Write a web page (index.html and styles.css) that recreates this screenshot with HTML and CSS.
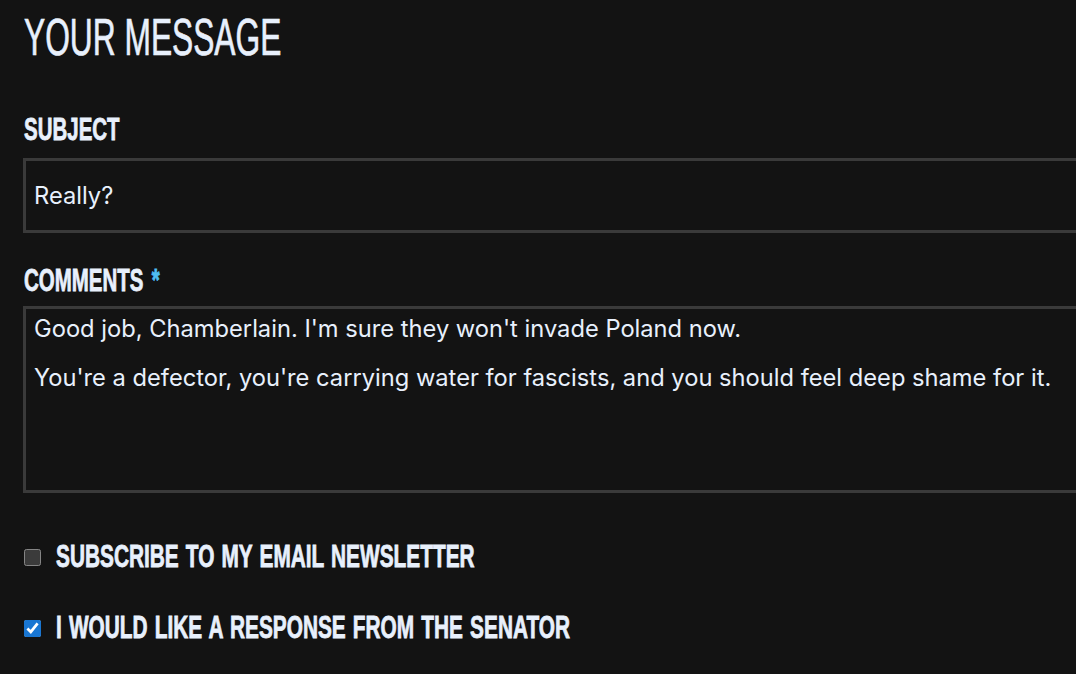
FILE: index.html
```html
<!DOCTYPE html>
<html lang="en">
<head>
<meta charset="utf-8">
<title>Contact</title>
<link rel="stylesheet" href="styles.css">
</head>
<body>
<form class="message-form">
  <h2 class="section-title"><span class="squeeze">YOUR MESSAGE</span></h2>

  <div class="field">
    <label class="field-label" for="subject"><span class="squeeze">SUBJECT</span></label>
    <input class="text-input" id="subject" type="text" value="Really?">
  </div>

  <div class="field field-comments">
    <label class="field-label" for="comments"><span class="squeeze">COMMENTS<span class="required">*</span></span></label>
    <textarea class="text-area" id="comments" rows="6">Good job, Chamberlain. I'm sure they won't invade Poland now.

You're a defector, you're carrying water for fascists, and you should feel deep shame for it.</textarea>
  </div>

  <label class="check-row">
    <input class="check" type="checkbox">
    <span class="check-label"><span class="squeeze">SUBSCRIBE TO MY EMAIL NEWSLETTER</span></span>
  </label>

  <label class="check-row">
    <input class="check" type="checkbox" checked>
    <span class="check-label"><span class="squeeze">I WOULD LIKE A RESPONSE FROM THE SENATOR</span></span>
  </label>
</form>
</body>
</html>
```

FILE: styles.css
```css
html, body {
  margin: 0;
  padding: 0;
  background: #131313;
  color: #e8f0fc;
  overflow: hidden;
}

body {
  font-family: Inter, "Noto Sans", sans-serif;
}

.message-form {
  display: flex;
  flex-direction: column;
  padding: 0 0 0 23px;
  width: 1200px;
}

/* condensed display lettering */
.squeeze {
  display: inline-block;
  transform-origin: left center;
  white-space: nowrap;
}

.section-title {
  margin: 0;
  font-family: "Liberation Sans Narrow", "Liberation Sans", sans-serif;
  font-weight: 400;
  font-size: 52px;
  line-height: 74px;
  padding-left: 1px;
  color: #e8f0fc;
  -webkit-text-stroke: 0.7px #e8f0fc;
}

.section-title .squeeze {
  transform: scaleX(0.61);
}

.field {
  display: flex;
  flex-direction: column;
}

.field:first-of-type {
  margin-top: 36px;
}

.field-label {
  font-family: "Liberation Sans Narrow", "Liberation Sans", sans-serif;
  font-weight: 700;
  font-size: 32px;
  line-height: 38px;
  padding-left: 1px;
  margin-bottom: 10px;
  -webkit-text-stroke: 0.8px #e8f0fc;
}

.field-comments .field-label {
  margin-bottom: 7px;
}

.field-label .squeeze {
  transform: scaleX(0.64);
}

.required {
  margin-left: 13px;
  color: #4fbdf2;
  -webkit-text-stroke: 0.8px #4fbdf2;
}

.text-input,
.text-area {
  box-sizing: border-box;
  width: 1100px;
  margin: 0;
  background: #131313;
  color: #e8f0fc;
  border: 3px solid #3a3a3a;
  font-family: Inter, "Noto Sans", sans-serif;
  font-size: 23.7px;
  outline: none;
}

.text-input {
  height: 75px;
  padding: 0 8px;
  margin-bottom: 28px;
}

.text-area {
  height: 187px;
  padding: 8px 8px 5px;
  line-height: 24.5px;
  resize: none;
  overflow: hidden;
  margin-bottom: 44px;
}

.check-row {
  display: flex;
  align-items: center;
  gap: 15px;
  height: 40px;
  margin-bottom: 31px;
  padding-left: 1px;
}

.check {
  margin: 0;
  width: 17px;
  height: 17px;
  color-scheme: dark;
  accent-color: #1976d2;
}

.check-label {
  font-family: "Liberation Sans Narrow", "Liberation Sans", sans-serif;
  font-weight: 700;
  font-size: 31px;
  line-height: 40px;
  word-spacing: 2px;
  -webkit-text-stroke: 0.8px #e8f0fc;
}

.check-label .squeeze {
  transform: scaleX(0.672);
}
```
